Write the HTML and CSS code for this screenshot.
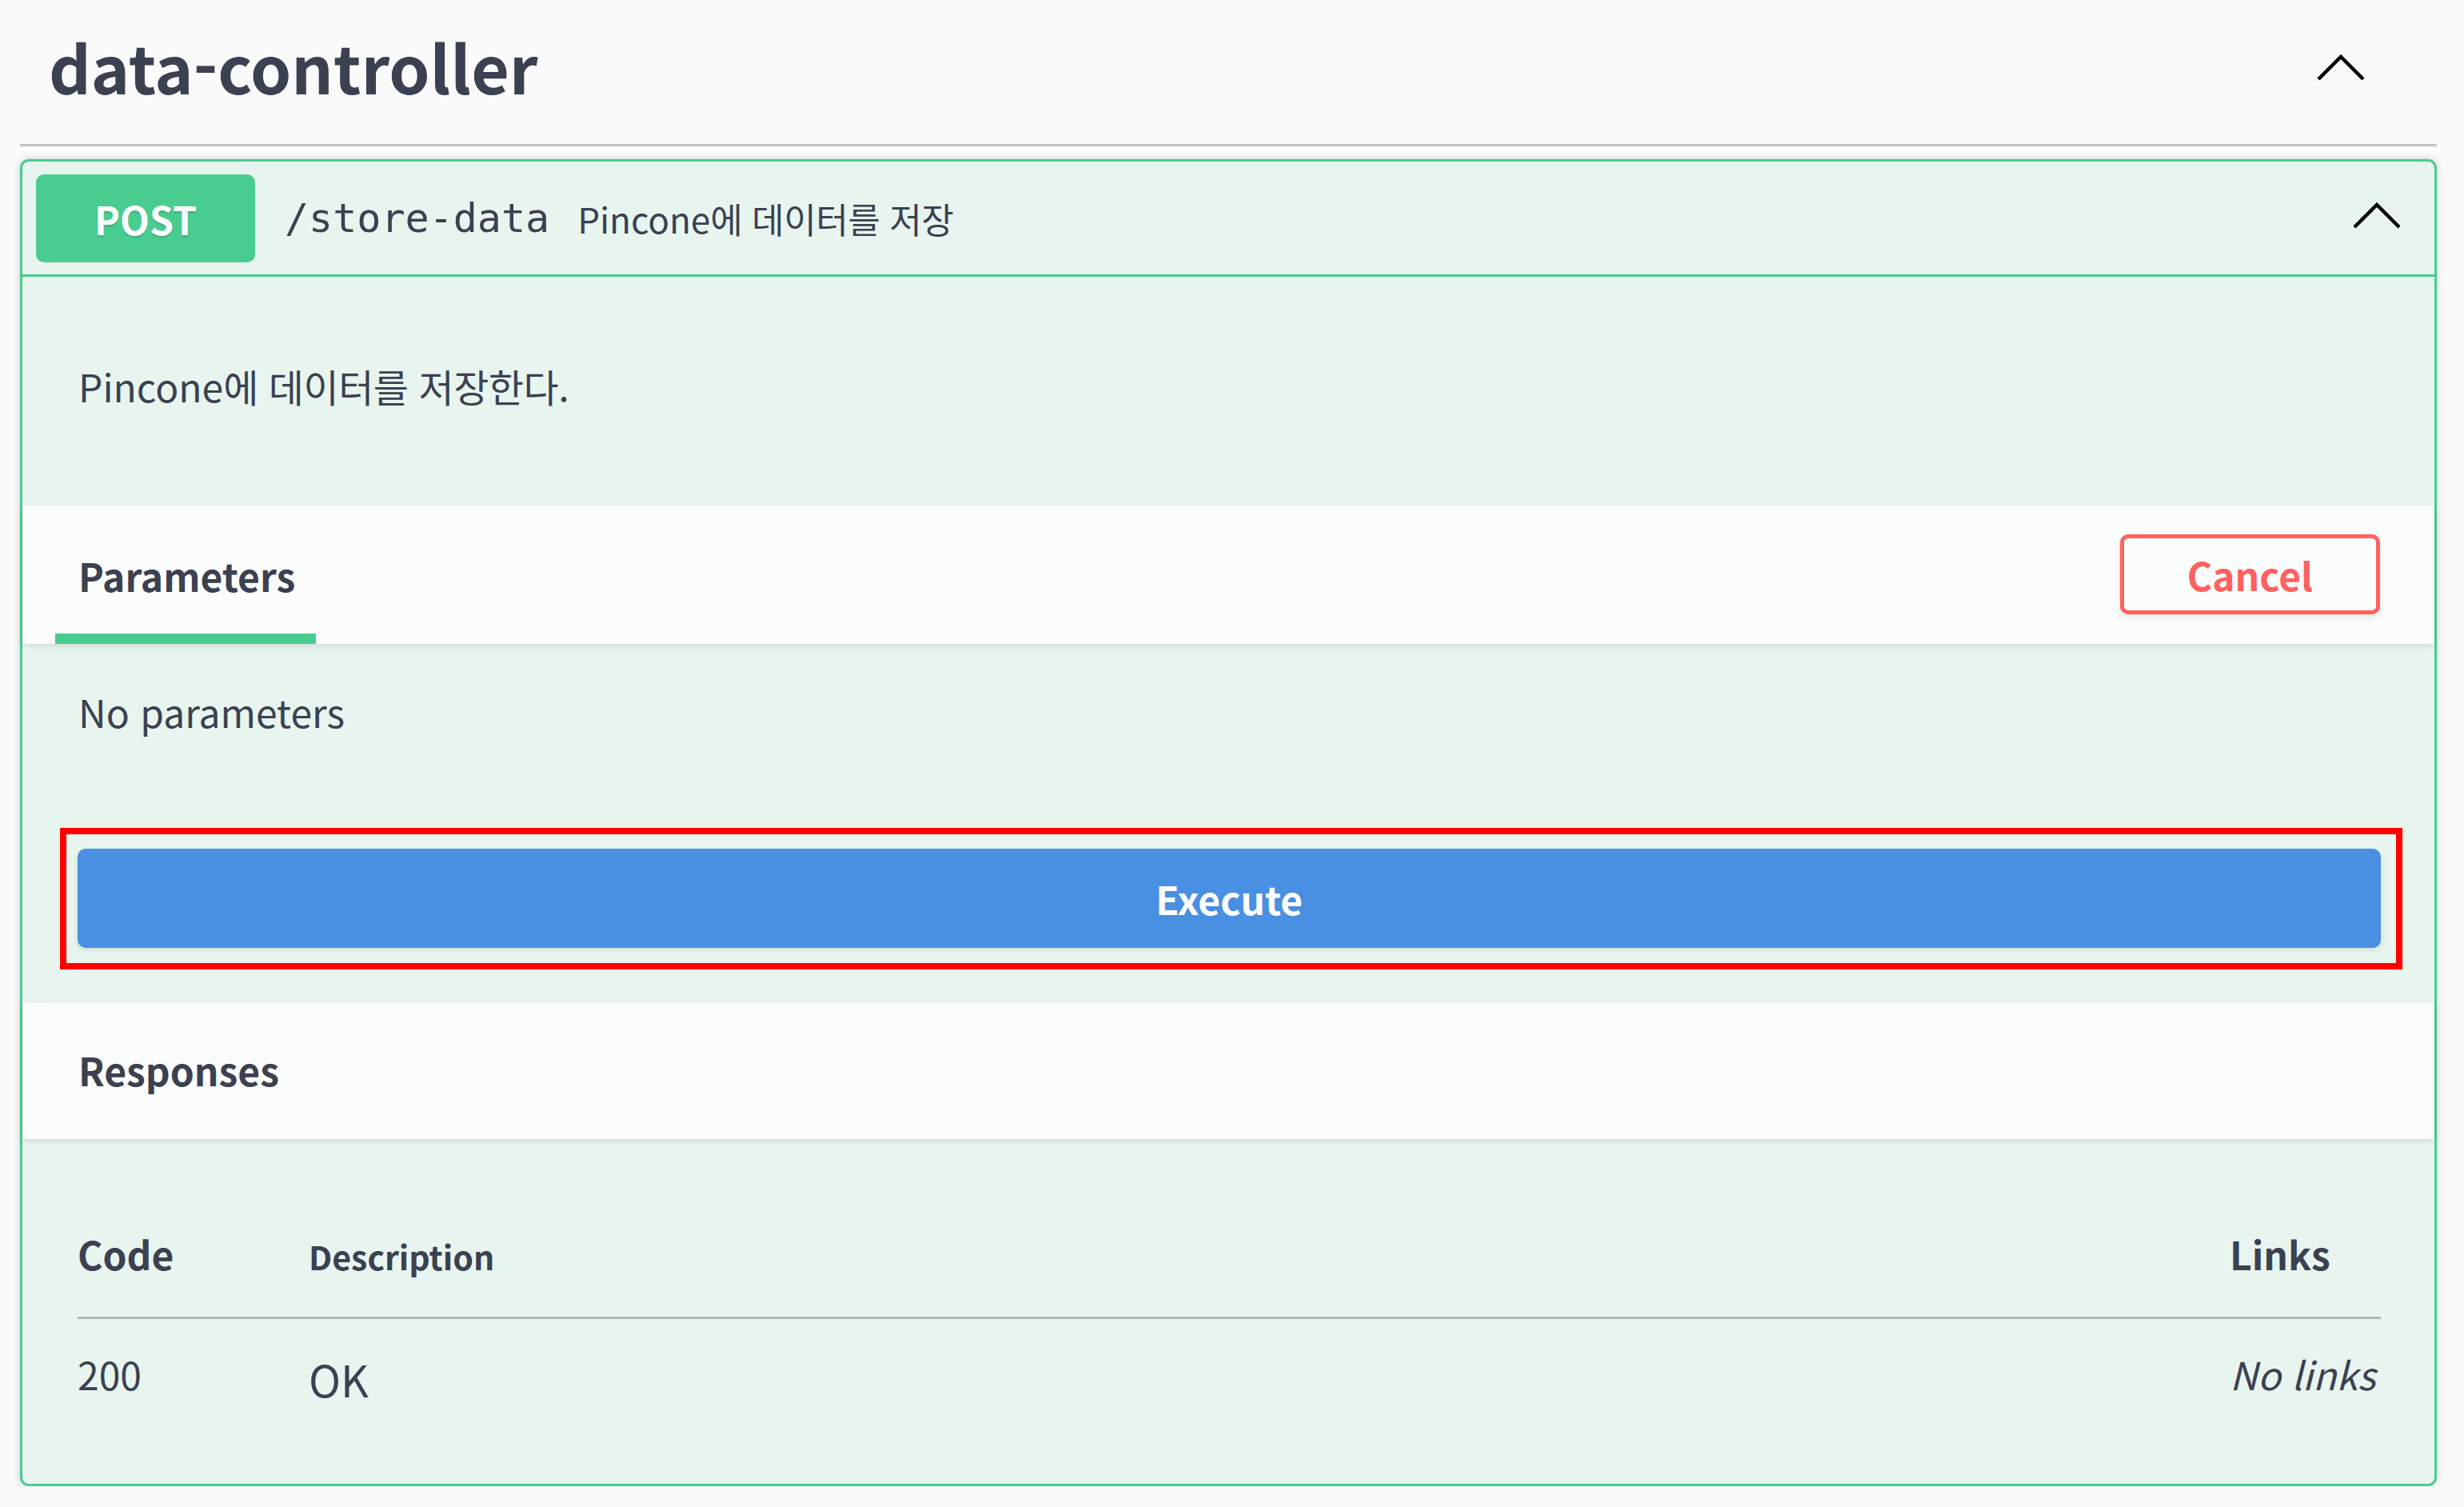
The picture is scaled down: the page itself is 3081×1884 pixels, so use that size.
FILE: index.html
```html
<!DOCTYPE html>
<html lang="ko">
<head>
<meta charset="utf-8">
<title>data-controller</title>
<link rel="stylesheet" href="styles.css">
</head>
<body>
<div class="page">
  <div class="tag-row">
    <h3 class="tag-title">data-controller</h3>
    <svg class="chev chev-tag" width="60" height="34" viewBox="0 0 60 34"><polyline points="2,31 30,3 58,31" /></svg>
  </div>

  <div class="opblock">
    <div class="summary">
      <span class="method">POST</span>
      <span class="path">/store-data</span>
      <span class="summary-desc">Pincone<span class="ko">에 데이터를 저장</span></span>
      <svg class="chev chev-op" width="60" height="34" viewBox="0 0 60 34"><polyline points="2,31 30,3 58,31" /></svg>
    </div>

    <div class="op-body">
      <div class="desc"><p>Pincone<span class="ko">에 데이터를 저장한다.</span></p></div>

      <div class="section-header">
        <div class="tab"><h4>Parameters</h4></div>
        <button class="btn-cancel">Cancel</button>
      </div>

      <div class="params"><p>No parameters</p></div>

      <div class="exec-frame">
        <button class="btn-execute">Execute</button>
      </div>

      <div class="section-header responses-header">
        <h4>Responses</h4>
      </div>

      <div class="responses-body">
        <table class="responses-table">
          <colgroup>
            <col class="col-code">
            <col class="col-desc">
            <col class="col-links">
          </colgroup>
          <thead>
            <tr>
              <td class="h-code">Code</td>
              <td class="h-desc">Description</td>
              <td class="h-links">Links</td>
            </tr>
          </thead>
          <tbody>
            <tr>
              <td class="c-code">200</td>
              <td class="c-desc">OK</td>
              <td class="c-links">No links</td>
            </tr>
          </tbody>
        </table>
      </div>
    </div>
  </div>
</div>
</body>
</html>
```

FILE: styles.css
```css
html, body {
  margin: 0;
  padding: 0;
}

body {
  background: #fafafa;
  font-family: "Noto Sans CJK KR", "Noto Sans", sans-serif;
  color: #3b4151;
}

.page {
  padding: 0 34px 0 25px;
}

.ko {
  letter-spacing: -0.01em;
}

/* tag header */
.tag-row {
  display: flex;
  align-items: flex-start;
  justify-content: space-between;
  height: 180px;
  padding: 0 90px 0 36px;
  border-bottom: 3px solid #c1c3c7;
}

.tag-title {
  margin: 23px 0 0;
  font-size: 82px;
  font-weight: 700;
  line-height: normal;
  color: #3b4151;
}

.chev polyline {
  fill: none;
  stroke: #000;
  stroke-width: 4.5;
}

.chev-tag {
  margin-top: 68px;
}

/* operation block */
.opblock {
  margin-top: 16px;
  border: 3px solid #49cc90;
  border-radius: 11px;
  background: #e8f5ef;
  box-shadow: 0 0 10px rgba(0, 0, 0, 0.19);
}

.summary {
  display: flex;
  align-items: center;
  height: 141px;
  padding: 0 42px 0 17px;
  border-bottom: 3px solid #49cc90;
}

.method {
  display: flex;
  align-items: center;
  justify-content: center;
  width: 274px;
  height: 110px;
  border-radius: 10px;
  background: #49cc90;
  color: #fff;
  font-size: 48px;
  font-weight: 700;
  text-shadow: 0 3px 0 rgba(0, 0, 0, 0.1);
}

.path {
  margin-left: 37px;
  font-family: "DejaVu Sans Mono", "Liberation Mono", monospace;
  font-size: 50px;
  color: #3b4151;
}

.summary-desc {
  margin-left: 35px;
  font-size: 44px;
  color: #3b4151;
}

.chev-op {
  margin-left: auto;
  margin-top: -6px;
}

/* description */
.desc {
  padding: 101px 70px 115px;
}

.desc p,
.params p {
  margin: 0;
  font-size: 48px;
  line-height: normal;
}

/* section headers */
.section-header {
  display: flex;
  justify-content: space-between;
  align-items: flex-start;
  height: 173px;
  padding: 0 68px 0 41px;
  background: rgba(255, 255, 255, 0.8);
  box-shadow: 0 3px 7px rgba(0, 0, 0, 0.1);
}

.tab {
  box-sizing: border-box;
  height: 173px;
  padding: 52px 26px 0 29px;
  border-bottom: 13px solid #49cc90;
}

.section-header h4 {
  margin: 0;
  font-size: 48px;
  font-weight: 700;
  line-height: normal;
  color: #3b4151;
}

.btn-cancel {
  box-sizing: border-box;
  margin-top: 36px;
  width: 325px;
  height: 100px;
  border: 5px solid #ff6060;
  border-radius: 10px;
  background: transparent;
  color: #ff6060;
  font-family: inherit;
  font-size: 48px;
  font-weight: 700;
  line-height: 1;
  box-shadow: 0 3px 7px rgba(0, 0, 0, 0.1);
  padding: 0;
}

/* parameters */
.params {
  padding: 49px 70px 0;
}

/* execute */
.exec-frame {
  margin: 111px 40px 0 47px;
  padding: 18px 19px 19px 14px;
  border: 8px solid #ff0000;
}

.btn-execute {
  display: block;
  width: 100%;
  height: 124px;
  border: none;
  border-radius: 10px;
  background: #4990e2;
  color: #fff;
  font-family: inherit;
  font-size: 48px;
  font-weight: 700;
  line-height: 1;
  box-shadow: 0 3px 7px rgba(0, 0, 0, 0.1);
  padding: 0;
}

/* responses */
.responses-header {
  margin-top: 41px;
  height: 171px;
  padding: 49px 70px 0;
  box-sizing: border-box;
}

.responses-body {
  padding: 108px 67px 92px 69px;
}

.responses-table {
  width: 100%;
  border-collapse: collapse;
  table-layout: fixed;
}

.col-code { width: 289px; }
.col-links { width: 189px; }

.responses-table td {
  padding: 0;
  color: #3b4151;
  line-height: normal;
}

.responses-table thead td {
  vertical-align: baseline;
  font-weight: 700;
  padding-bottom: 44px;
  border-bottom: 3px solid #adb8b8;
}

.h-code,
.h-links {
  font-size: 48px;
}

.h-desc {
  font-size: 41px;
}

.responses-table tbody td {
  vertical-align: top;
  font-size: 48px;
  padding-top: 33px;
}

.responses-table tbody td.c-desc {
  font-size: 54px;
  padding-top: 35px;
}

.c-links {
  font-style: italic;
}
```
